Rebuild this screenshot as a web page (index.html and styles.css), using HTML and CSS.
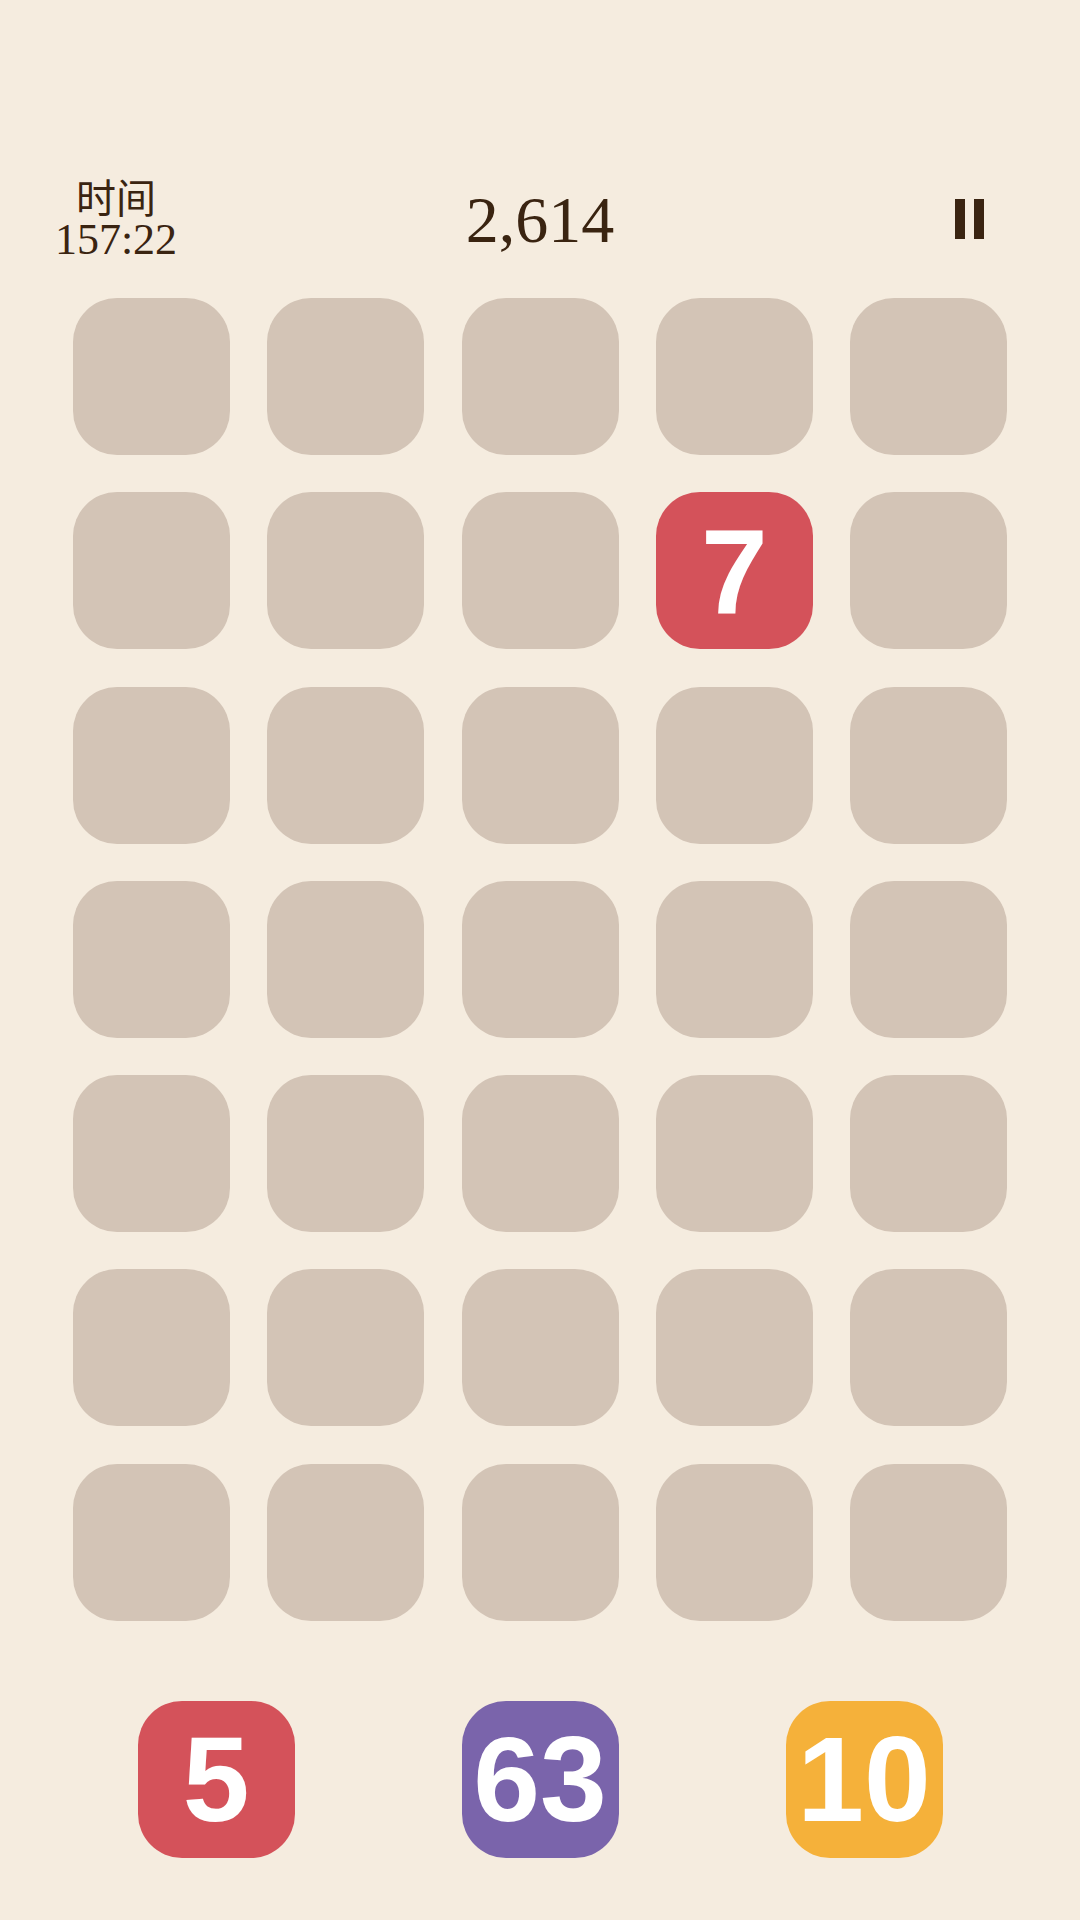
FILE: index.html
```html
<!DOCTYPE html>
<html lang="zh">
<head>
    <meta charset="UTF-8">
    <meta name="viewport" content="width=device-width, initial-scale=1.0">
    <title>Merge</title>
    <link rel="stylesheet" href="styles.css">
</head>
<body>

    <div class="header">
        <div class="timer">
            <div class="timer-label">时间</div>
            <div class="timer-value">157:22</div>
        </div>
        <div class="score">2,614</div>
        <div class="pause-wrap">
            <div class="pause">
                <span></span>
                <span></span>
            </div>
        </div>
    </div>

    <div class="board">
        <div class="cell"></div><div class="cell"></div><div class="cell"></div><div class="cell"></div><div class="cell"></div>
        <div class="cell"></div><div class="cell"></div><div class="cell"></div><div class="cell tile red">7</div><div class="cell"></div>
        <div class="cell"></div><div class="cell"></div><div class="cell"></div><div class="cell"></div><div class="cell"></div>
        <div class="cell"></div><div class="cell"></div><div class="cell"></div><div class="cell"></div><div class="cell"></div>
        <div class="cell"></div><div class="cell"></div><div class="cell"></div><div class="cell"></div><div class="cell"></div>
        <div class="cell"></div><div class="cell"></div><div class="cell"></div><div class="cell"></div><div class="cell"></div>
        <div class="cell"></div><div class="cell"></div><div class="cell"></div><div class="cell"></div><div class="cell"></div>
    </div>

    <div class="tray">
        <div class="cell tile red">5</div>
        <div class="cell tile purple">63</div>
        <div class="cell tile orange">10</div>
    </div>

</body>
</html>
```

FILE: styles.css
```css
body {
    margin: 0;
    background: #f5ecdf;
    color: #3a2411;
    font-family: "Liberation Serif", "Noto Sans CJK SC", serif;
}
.header {
    display: grid;
    grid-template-columns: 232px 1fr 232px;
    align-items: center;
    padding-top: 174px;
    height: 88px;
}
.timer {
    text-align: center;
}
.timer-label {
    font-family: "Noto Sans CJK SC", sans-serif;
    font-size: 40px;
    line-height: 42px;
}
.timer-value {
    font-size: 44px;
    line-height: 46px;
}
.score {
    text-align: center;
    font-size: 66px;
    line-height: 88px;
    padding-top: 2px;
}
.pause-wrap {
    display: flex;
    justify-content: center;
    padding-left: 10px;
}
.pause {
    display: flex;
    gap: 9px;
}
.pause span {
    width: 10px;
    height: 40px;
    background: #3a2411;
}
.board {
    display: grid;
    grid-template-columns: repeat(5, 157px);
    grid-auto-rows: 157px;
    gap: 37.3px;
    justify-content: center;
    margin-top: 36px;
}
.cell {
    width: 157px;
    height: 157px;
    border-radius: 44px;
    background: #d3c4b6;
}
.tile {
    display: flex;
    align-items: center;
    justify-content: center;
    color: white;
    font-family: "Liberation Sans", Arial, sans-serif;
    font-weight: bold;
    font-size: 120px;
    line-height: 1;
}
.red {
    background: #d4525a;
}
.purple {
    background: #7a64ab;
}
.orange {
    background: #f5b13a;
}
.tray {
    display: flex;
    justify-content: center;
    gap: 167px;
    margin-top: 80px;
}
```
